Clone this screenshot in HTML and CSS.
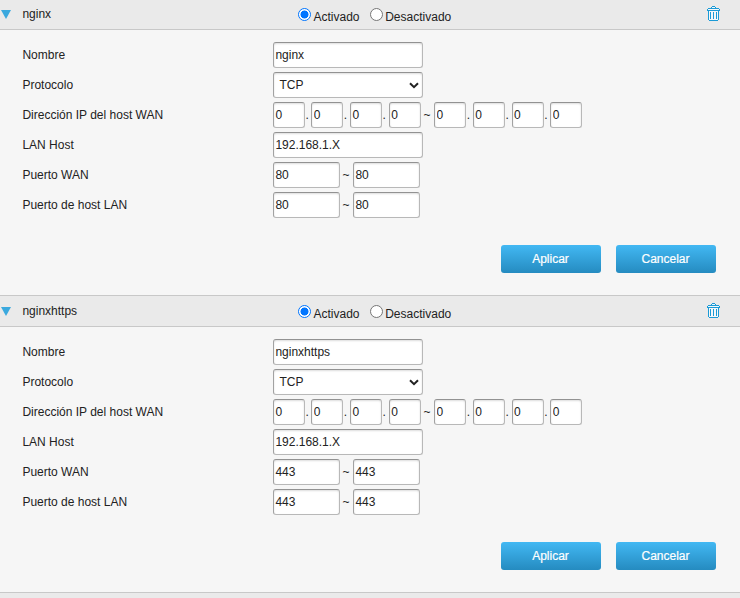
FILE: index.html
```html
<!DOCTYPE html>
<html lang="es">
<head>
<meta charset="utf-8">
<title>Reenvío de puertos</title>
<link rel="stylesheet" href="styles.css">
</head>
<body>
<main id="rules"></main>
<div class="rule-end"></div>
<script src="app.js"></script>
</body>
</html>
```
FILE: app.js
```js
const rules = [
  { name: "nginx", port: "80" },
  { name: "nginxhttps", port: "443" }
];

const octet = '<input class="field octet" value="0">';
const address = Array(4).fill(octet).join('<span class="dot">.</span>');
const row = (label, control) =>
  `<div class="row"><span class="label">${label}</span><div class="control">${control}</div></div>`;
const range = (port) =>
  `<input class="field port" value="${port}"><span class="tilde">~</span><input class="field port" value="${port}">`;

document.getElementById("rules").innerHTML = rules.map((r) => `
<section class="rule">
  <header class="head">
    <svg class="arrow" width="10" height="9" viewBox="0 0 10 9"><path d="M0 0H10L5 9Z"/></svg>
    <span class="title">${r.name}</span>
    <div class="state">
      <label><i class="radio on"></i><span>Activado</span></label>
      <label><i class="radio"></i><span>Desactivado</span></label>
    </div>
    <svg class="trash" width="13" height="15" viewBox="0 0 13 15" shape-rendering="crispEdges">
      <path d="M5 0H8V1H9V2H12V3H13V5H12V14H11V15H2V14H1V5H0V3H1V2H4V1H5Z"/>
      <path class="gap" d="M5 1H8V2H5ZM1 3H12V4H1ZM2 5H11V14H2Z"/>
      <path d="M3 6H4V13H3ZM6 6H7V13H6ZM9 6H10V13H9Z"/>
    </svg>
  </header>
  <div class="body">
    ${row("Nombre", `<input class="field wide" value="${r.name}">`)}
    ${row("Protocolo", `<div class="select"><select class="field wide"><option>TCP</option></select><svg class="chevron" width="10" height="7" viewBox="0 0 10 7"><path d="M1 1.2L5 5.2L9 1.2"/></svg></div>`)}
    ${row("Dirección IP del host WAN", `${address}<span class="tilde address-tilde">~</span>${address}`)}
    ${row("LAN Host", '<input class="field wide" value="192.168.1.X">')}
    ${row("Puerto WAN", range(r.port))}
    ${row("Puerto de host LAN", range(r.port))}
    <div class="actions"><button>Aplicar</button><button>Cancelar</button></div>
  </div>
</section>`).join("");
```
FILE: styles.css
```css
* { box-sizing: border-box; }
body {
  margin: -2px 0 0;
  height: 600px;
  overflow: hidden;
  background: #f6f6f6;
  color: #222;
  font: 12px/16px "Liberation Sans", Arial, sans-serif;
}
.rule { height: 297px; }
.head {
  display: flex;
  align-items: flex-start;
  height: 32px;
  background: #eaeaea;
  border-top: 1px solid #c8c8c8;
  border-bottom: 1px solid #c8c8c8;
}
.arrow { margin: 11px 0 0 1px; fill: #3ba9de; }
.title { width: 275.4px; margin: 7px 0 0 11.4px; }
.state { display: flex; width: 409.2px; padding-top: 9px; }
.state label { display: flex; height: 16px; }
.state label + label { margin-left: 10px; }
.state span { margin-left: 2.7px; line-height: 18px; }
.radio {
  width: 13px;
  height: 13px;
  border: 1px solid #767676;
  border-radius: 50%;
  background: #fff;
}
.radio.on {
  border-color: #0075ff;
  background: radial-gradient(circle, #0075ff 3.7px, #fff 4.3px);
}
.trash { margin-top: 7px; fill: #1b9ad6; }
.trash .gap { fill: #f4f8fa; }
.body { padding-top: 10px; }
.row { display: flex; align-items: center; height: 30px; }
.label { width: 273px; padding-left: 22.4px; }
.control { display: flex; align-items: center; }
.field {
  height: 26px;
  margin: 0;
  padding: 0 1.4px;
  border: 1px solid #b8b8b8;
  border-top-color: #929292;
  border-left-color: #a2a2a2;
  border-radius: 3px;
  background: #fff;
  box-shadow: inset 0 1px 2px #ddd;
  color: #222;
  font: inherit;
}
.wide { width: 150px; }
.octet { width: 32px; }
.port { width: 67px; }
.dot { width: 6.75px; padding-left: 0.5px; }
.octet:first-child + .dot { width: 6.35px; }
.tilde { width: 13px; padding-right: 0.8px; text-align: center; }
.address-tilde { width: 13.3px; }
.select { position: relative; display: flex; }
.select .field { appearance: none; padding-left: 5.4px; }
.chevron {
  position: absolute;
  right: 4px;
  top: 10px;
  fill: none;
  stroke: #222;
  stroke-width: 2;
}
.actions { display: flex; justify-content: flex-end; gap: 15px; padding: 25px 24px 0 0; }
button {
  width: 100px;
  height: 28px;
  padding: 0 1px 0 0;
  border: 0;
  border-radius: 3px;
  background: linear-gradient(#42b8f3, #258bc0);
  color: #fff;
  font: inherit;
  -webkit-text-stroke: 0.2px #fff;
}
.rule-end { height: 6px; background: #eaeaea; border-top: 1px solid #c8c8c8; }
```
